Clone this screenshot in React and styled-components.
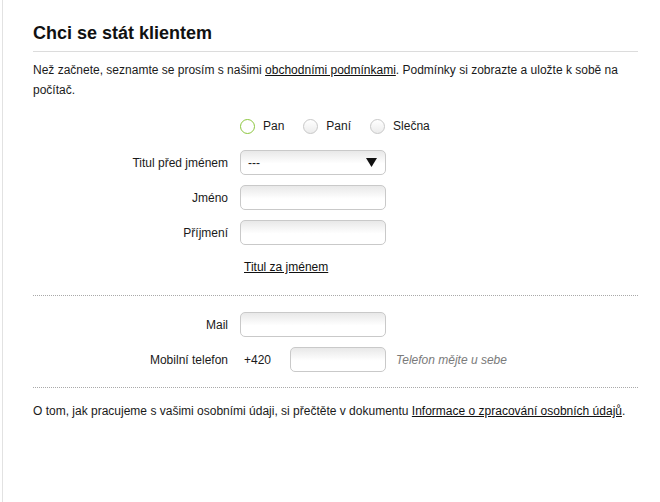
import React, { useState } from 'react';
import styled, { createGlobalStyle } from 'styled-components';

const GlobalStyle = createGlobalStyle`
  html, body {
    margin: 0;
    padding: 0;
    background: #fff;
  }
  body {
    font-family: "Liberation Sans", Arial, sans-serif;
    font-size: 12px;
    color: #1a1a1a;
  }
`;

const Page = styled.div`
  margin-left: 2px;
  min-height: 100vh;
  box-sizing: border-box;
  border-left: 1px solid #e2e2e2;
  padding: 22px 22px 0 30px;
`;

const Heading = styled.h2`
  margin: 0;
  font-size: 18px;
  line-height: 22px;
  font-weight: bold;
  color: #111;
  padding-bottom: 7px;
  border-bottom: 1px solid #dcdcdc;
`;

const Text = styled.p`
  margin: ${(p) => p.$top || 0}px 0 0;
  line-height: 20px;
`;

const Link = styled.a`
  color: #111;
  text-decoration: underline;
  cursor: pointer;
`;

const Form = styled.div`
  display: grid;
  grid-template-columns: 195px 1fr;
  column-gap: 12px;
  align-items: center;
  margin-top: ${(p) => p.$top || 0}px;
`;

const Label = styled.label`
  text-align: right;
  line-height: 20px;
  margin-top: ${(p) => p.$top || 0}px;
`;

const Field = styled.div`
  display: flex;
  align-items: center;
  margin-top: ${(p) => p.$top || 0}px;
  grid-column: 2;
`;

const RadioItem = styled.label`
  display: flex;
  align-items: center;
  height: 20px;
  margin-right: 19px;
  cursor: pointer;
`;

const RadioCircle = styled.span`
  width: 15px;
  height: 15px;
  box-sizing: border-box;
  border-radius: 50%;
  border: 1px solid ${(p) => (p.$checked ? '#8cc63e' : '#c8c8c8')};
  background: ${(p) =>
    p.$checked ? '#fff' : 'linear-gradient(to bottom, #fff 0%, #ececec 100%)'};
  margin-right: 8px;
`;

const Input = styled.input`
  box-sizing: border-box;
  width: ${(p) => p.$width || 146}px;
  height: 25px;
  border: 1px solid #c9c9c9;
  border-radius: 5px;
  background: linear-gradient(to bottom, #e8e8e8 0%, #fff 55%);
  outline: none;
  padding: 0 7px;
  font: inherit;
`;

const Select = styled.div`
  box-sizing: border-box;
  width: 146px;
  height: 25px;
  border: 1px solid #c9c9c9;
  border-radius: 5px;
  background: linear-gradient(to bottom, #e8e8e8 0%, #fff 55%);
  display: flex;
  align-items: center;
  justify-content: space-between;
  padding: 0 8px 0 7px;
  cursor: pointer;
`;

const Prefix = styled.span`
  width: 46px;
  padding-left: 4px;
`;

const Hint = styled.span`
  margin-left: 10px;
  font-style: italic;
  color: #7a7a7a;
`;

const SubLink = styled(Link)`
  margin-left: 4px;
  line-height: 20px;
`;

const Divider = styled.div`
  border-top: 1px dotted #a9a9a9;
  margin-top: ${(p) => p.$top || 0}px;
`;

const Triangle = () => (
  <svg width="11" height="9" viewBox="0 0 11 9">
    <path d="M0 0 H11 L5.5 9 Z" fill="#111" />
  </svg>
);

const salutations = ['Pan', 'Paní', 'Slečna'];

export default function App() {
  const [salutation, setSalutation] = useState('Pan');

  return (
    <>
      <GlobalStyle />
      <Page>
        <Heading>Chci se stát klientem</Heading>
        <Text $top={8}>
          Než začnete, seznamte se prosím s našimi <Link>obchodními podmínkami</Link>. Podmínky si
          zobrazte a uložte k sobě na počítač.
        </Text>

        <Form $top={16}>
          <Field>
            {salutations.map((s) => (
              <RadioItem key={s} onClick={() => setSalutation(s)}>
                <RadioCircle $checked={salutation === s} />
                {s}
              </RadioItem>
            ))}
          </Field>

          <Label $top={14}>Titul před jménem</Label>
          <Field $top={14}>
            <Select>
              <span>---</span>
              <Triangle />
            </Select>
          </Field>

          <Label $top={10}>Jméno</Label>
          <Field $top={10}>
            <Input />
          </Field>

          <Label $top={10}>Příjmení</Label>
          <Field $top={10}>
            <Input />
          </Field>

          <Field $top={12}>
            <SubLink>Titul za jménem</SubLink>
          </Field>
        </Form>

        <Divider $top={18} />

        <Form $top={16}>
          <Label>Mail</Label>
          <Field>
            <Input />
          </Field>

          <Label $top={10}>Mobilní telefon</Label>
          <Field $top={10}>
            <Prefix>+420</Prefix>
            <Input $width={96} />
            <Hint>Telefon mějte u sebe</Hint>
          </Field>
        </Form>

        <Divider $top={15} />

        <Text $top={13}>
          O tom, jak pracujeme s vašimi osobními údaji, si přečtěte v dokumentu{' '}
          <Link>Informace o zpracování osobních údajů</Link>.
        </Text>
      </Page>
    </>
  );
}
